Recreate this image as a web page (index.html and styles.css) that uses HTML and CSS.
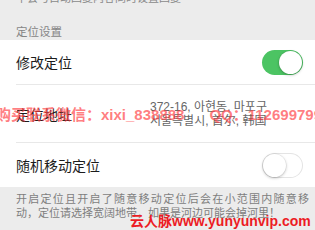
FILE: index.html
```html
<!DOCTYPE html>
<html lang="zh-CN">
<head>
<meta charset="utf-8">
<title>定位设置</title>
<link rel="stylesheet" href="styles.css">
</head>
<body>
<div class="page">
  <div class="note-top">不会与自动回复内容同时设置回复</div>
  <div class="group-title">定位设置</div>
  <div class="list">
    <div class="row">
      <div class="row-inner h44">
        <span class="label">修改定位</span>
        <span class="switch on"><span class="knob"></span></span>
      </div>
    </div>
    <div class="row">
      <div class="row-inner h57">
        <span class="label">定位地址</span>
        <span class="value">372-16, 아현동, 마포구<br>서울특별시, 首尔, 韩国</span>
      </div>
    </div>
    <div class="row">
      <div class="row-inner h44 last">
        <span class="label">随机移动定位</span>
        <span class="switch off"><span class="knob"></span></span>
      </div>
    </div>
  </div>
  <div class="note-bottom">
    <span class="line1">开启定位且开启了随意移动定位后会在小范围内随意移</span>
    <span class="line2">动，定位请选择宽阔地带，如果是河边可能会掉河里！</span>
  </div>
  <div class="wm wm1">购买联系微信：xixi_838888<span class="gap"></span>QQ：1126997999</div>
  <div class="wm wm2">云人脉www.yunyunvip.com</div>
</div>
</body>
</html>
```

FILE: styles.css
```css
html, body {
  margin: 0;
  padding: 0;
}
body {
  width: 315px;
  height: 230px;
  overflow: hidden;
  background: #ececec;
  font-family: "Noto Sans CJK SC", "Liberation Sans", sans-serif;
}
.page {
  position: relative;
  margin-top: -10px;
}
.note-top {
  padding: 0 16px;
  font-size: 11px;
  line-height: 15px;
  color: #8a8a8a;
  white-space: nowrap;
}
.group-title {
  height: 35px;
  box-sizing: border-box;
  padding: 0 16px 1px;
  display: flex;
  align-items: flex-end;
  font-size: 11.5px;
  line-height: 16px;
  color: #858585;
}
.list {
  background: #fff;
}
.row {
  padding-left: 16px;
}
.row-inner {
  display: flex;
  align-items: center;
  padding-right: 12px;
  border-bottom: 1px solid #e8e8e8;
}
.row-inner.last {
  border-bottom: none;
}
.h44 { height: 44px; }
.h57 { height: 57px; }
.label {
  font-size: 14px;
  color: #1c1c1c;
  flex: 1;
}
.value {
  width: 130px;
  margin-right: 23px;
  font-family: "Liberation Sans", "Noto Sans CJK SC", sans-serif;
  font-size: 12px;
  line-height: 14px;
  color: #666;
  white-space: nowrap;
}
.switch {
  width: 41px;
  height: 25px;
  box-sizing: border-box;
  border-radius: 13px;
  display: flex;
  align-items: center;
  padding: 1px;
}
.switch.on {
  background: #4cc463;
  justify-content: flex-end;
}
.switch.off {
  background: #fff;
  box-shadow: inset 0 0 0 1px #e4e4e4;
  justify-content: flex-start;
}
.knob {
  width: 23px;
  height: 23px;
  border-radius: 50%;
  background: #fff;
  box-shadow: 0 1px 3px rgba(0,0,0,0.25), 0 0 0 0.5px rgba(0,0,0,0.08);
}
.note-bottom {
  padding: 4px 6px 0 16px;
  font-size: 11px;
  line-height: 14px;
  color: #7e7e7e;
}
.line1 {
  display: block;
  text-align: justify;
  text-align-last: justify;
  white-space: nowrap;
}
.line2 {
  display: block;
  white-space: nowrap;
}
.wm {
  position: absolute;
  white-space: nowrap;
  font-family: "Liberation Sans", "Noto Sans CJK SC", sans-serif;
  font-weight: bold;
}
.wm1 {
  top: 116px;
  left: -4px;
  font-size: 15px;
  line-height: 18px;
  color: rgba(255, 60, 65, 0.68);
}
.wm1 .gap {
  display: inline-block;
  width: 25px;
}
.wm2 {
  top: 223px;
  left: 130px;
  font-size: 14px;
  line-height: 16px;
  color: #ec1c24;
}
```
